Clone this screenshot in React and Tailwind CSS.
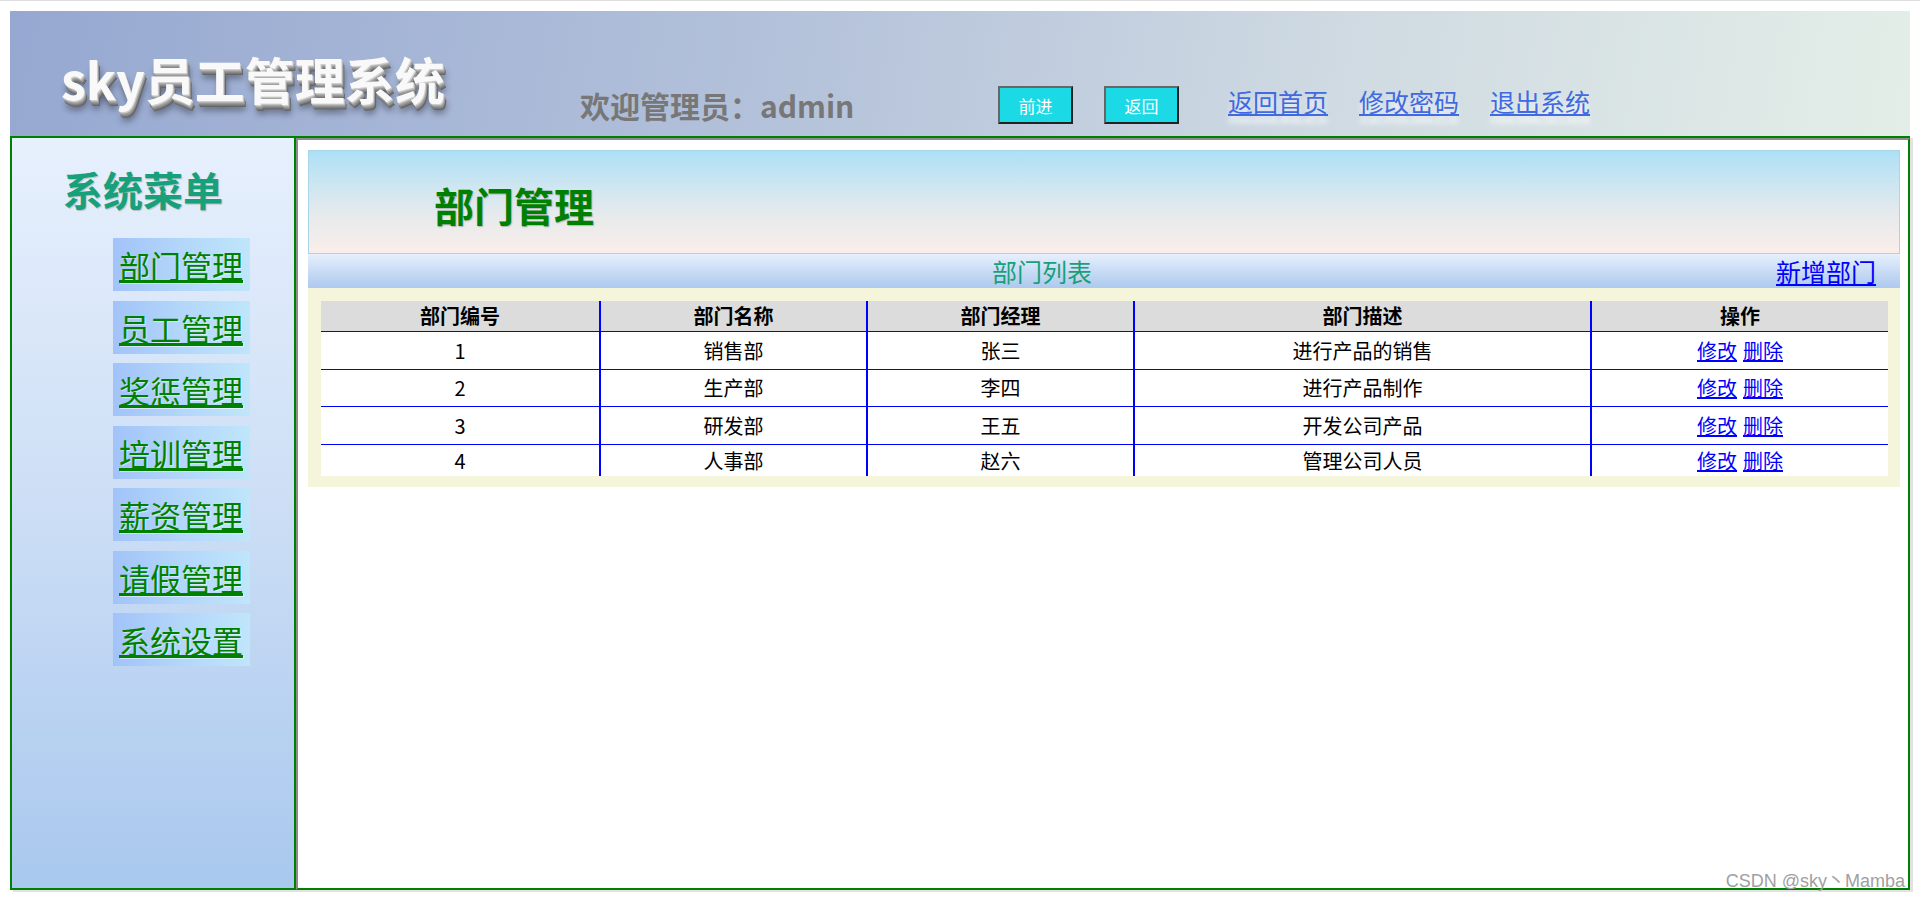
import React from "react";

const menus = ["部门管理", "员工管理", "奖惩管理", "培训管理", "薪资管理", "请假管理", "系统设置"];

const rows = [
  ["1", "销售部", "张三", "进行产品的销售", "h-[38px]"],
  ["2", "生产部", "李四", "进行产品制作", "h-[37px]"],
  ["3", "研发部", "王五", "开发公司产品", "h-[38px]"],
  ["4", "人事部", "赵六", "管理公司人员", "h-[32px]"],
];

const cell = "flex items-center justify-center";
const sep = "border-l-2 border-[#0000ff]";

export default function App() {
  return (
    <div className="relative w-[1920px] h-[902px] bg-white border-t border-[#dddddd] font-['Noto_Sans_CJK_SC',sans-serif] overflow-hidden">
      <div className="pt-[10px] pl-[10px] w-[1910px]">
        {/* Header */}
        <div className="h-[125px] flex items-start bg-[linear-gradient(100deg,#96a8d1_0%,#b3c1da_40%,#cfdae2_70%,#e4eee8_100%)]">
          <div className="w-[570px] shrink-0 pl-[51px] pt-[42px]">
            <div className="text-[50px] leading-none font-bold text-[#f9f9f9] whitespace-nowrap [text-shadow:1px_1px_0_#cfcfcf,1px_2px_0_#b0b0b0,2px_3px_0_#9a9a9a,2px_4px_0_#888,2px_5px_0_#777,3px_6px_0_#666,3px_9px_7px_rgba(0,0,0,0.45)]">
              sky员工管理系统
            </div>
          </div>
          <div className="w-[418px] shrink-0 pt-[79px]">
            <div className="text-[30px] leading-none font-bold text-[#777777] whitespace-nowrap">欢迎管理员：admin</div>
          </div>
          <div className="pt-[75px] flex items-start shrink-0">
            <button className="w-[75px] h-[38px] bg-[#1cd9e6] border-2 border-t-[#666] border-l-[#666] border-r-[#222] border-b-[#222] text-white text-[17px] leading-none">
              前进
            </button>
            <button className="ml-[31px] w-[75px] h-[38px] bg-[#1cd9e6] border-2 border-t-[#666] border-l-[#666] border-r-[#222] border-b-[#222] text-white text-[17px] leading-none">
              返回
            </button>
          </div>
          <div className="pt-[78px] pl-[49px] flex gap-[31px] shrink-0">
            {["返回首页", "修改密码", "退出系统"].map((t) => (
              <a key={t} href="#" className="text-[25px] leading-none text-[#4169e1] underline whitespace-nowrap [text-shadow:0_7px_5px_rgba(255,255,255,0.75)]">
                {t}
              </a>
            ))}
          </div>
        </div>

        {/* Body */}
        <div className="flex h-[754px] border-t-2 border-[#008000] shadow-[3px_2px_0_0_#e2e2e2]">
          {/* Sidebar */}
          <div className="w-[286px] shrink-0 border-l-2 border-r-2 border-b-2 border-[#008000] bg-[linear-gradient(180deg,#e7f0fd_0%,#cfe0f6_45%,#a9c8ee_100%)]">
            <div className="pt-[31px] pl-[51px] text-[40px] leading-none font-bold text-[#17a07a] [text-shadow:1px_1px_1px_rgba(160,160,160,0.6)]">
              系统菜单
            </div>
            <div className="mt-[29px] pl-[101px] flex flex-col gap-[9.5px]">
              {menus.map((m) => (
                <div key={m} className="w-[137px] h-[53px] flex items-center pl-[6px] bg-[linear-gradient(90deg,#a2c3f9_0%,#b3d6fa_50%,#bfe6fa_100%)]">
                  <a href="#" className="text-[31px] leading-none text-[#008000] underline whitespace-nowrap [text-shadow:1px_1px_1px_rgba(255,255,255,0.5)]">
                    {m}
                  </a>
                </div>
              ))}
            </div>
          </div>

          {/* Content */}
          <div className="flex-1 border-l-2 border-t-2 border-l-[#8c8c8c] border-t-[#8c8c8c] border-r-2 border-b-2 border-r-[#008000] border-b-[#008000] bg-white pt-[10px] pl-[10px] pr-[8px]">
            <div className="h-[104px] border border-[#a8d6e8] flex items-center pl-[125px] pt-[5px] bg-[linear-gradient(180deg,#ade0f6_0%,#cfe6f1_35%,#e8eaec_65%,#faeeea_100%)]">
              <div className="text-[40px] leading-none font-bold text-[#008000] [text-shadow:1px_1px_1px_rgba(120,120,120,0.45)]">部门管理</div>
            </div>
            <div className="h-[34px] flex bg-[linear-gradient(180deg,#e6f0fc_0%,#c9dcf5_50%,#adc9ee_100%)]">
              <div className="flex-1 flex items-center justify-center text-[25px] leading-none text-[#17a07a]">部门列表</div>
              <div className="w-[124px] flex items-center">
                <a href="#" className="text-[25px] leading-none text-[#0000ff] underline whitespace-nowrap">新增部门</a>
              </div>
            </div>
            <div className="bg-[#f5f5dc] pt-[13px] pb-[11px] pl-[13px] pr-[12px]">
              <div className="grid grid-cols-[278px_267px_267px_457px_298px] text-[20px] leading-none text-black">
                <div className={`h-[30px] bg-[#dcdcdc] font-bold ${cell}`}>部门编号</div>
                <div className={`h-[30px] bg-[#dcdcdc] font-bold ${cell} ${sep}`}>部门名称</div>
                <div className={`h-[30px] bg-[#dcdcdc] font-bold ${cell} ${sep}`}>部门经理</div>
                <div className={`h-[30px] bg-[#dcdcdc] font-bold ${cell} ${sep}`}>部门描述</div>
                <div className={`h-[30px] bg-[#dcdcdc] font-bold ${cell} ${sep}`}>操作</div>
                {rows.map((r) => (
                  <React.Fragment key={r[0]}>
                    <div className={`${r[4]} bg-white border-t border-[#0000ff] ${cell}`}>{r[0]}</div>
                    <div className={`${r[4]} bg-white border-t border-t-[#0000ff] ${cell} ${sep}`}>{r[1]}</div>
                    <div className={`${r[4]} bg-white border-t border-t-[#0000ff] ${cell} ${sep}`}>{r[2]}</div>
                    <div className={`${r[4]} bg-white border-t border-t-[#0000ff] ${cell} ${sep}`}>{r[3]}</div>
                    <div className={`${r[4]} bg-white border-t border-t-[#0000ff] ${cell} ${sep} gap-[6px]`}>
                      <a href="#" className="text-[#0000ff] underline">修改</a>
                      <a href="#" className="text-[#0000ff] underline">删除</a>
                    </div>
                  </React.Fragment>
                ))}
              </div>
            </div>
          </div>
        </div>
      </div>
      <div className="absolute top-[871px] right-[15px] text-[18px] leading-none text-[#a0a0a0] font-['Liberation_Sans','Noto_Sans_CJK_SC',sans-serif] whitespace-nowrap">
        CSDN @sky丶Mamba
      </div>
    </div>
  );
}
